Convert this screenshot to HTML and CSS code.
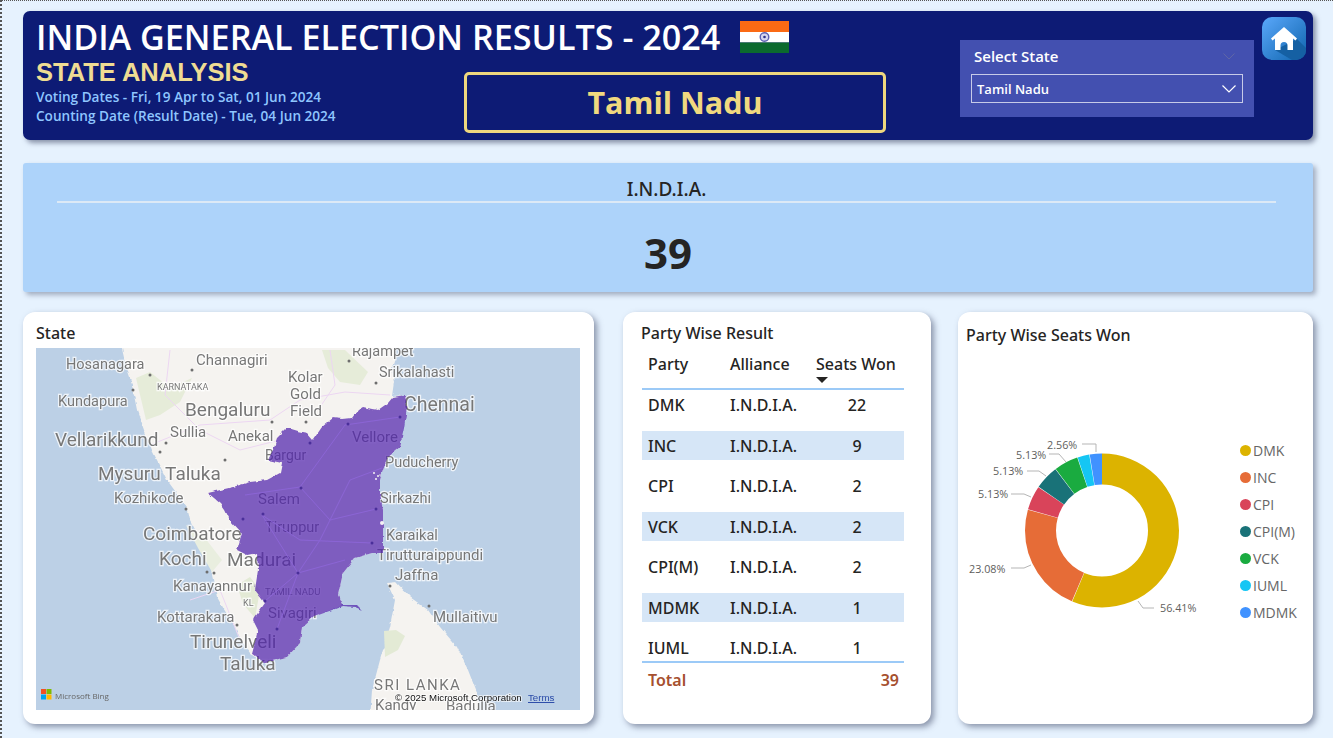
FILE: index.html
```html
<!DOCTYPE html>
<html lang="en">
<head>
  <meta charset="UTF-8">
  <title>India General Election Results 2024</title>
  <link rel="stylesheet" href="styles.css">
</head>
<body>
  <div class="page">
    <header class="banner">
      <div class="banner-left">
        <div class="title-row">
          <h1>INDIA GENERAL ELECTION RESULTS - 2024</h1>
          <svg class="flag" viewBox="0 0 49 32">
            <rect width="49" height="11" fill="#fb6a14"/>
            <rect y="11" width="49" height="10.5" fill="#fff"/>
            <rect y="21.5" width="49" height="10.5" fill="#0b6a2e"/>
            <circle cx="24.5" cy="16" r="4.3" fill="#d5d6f0" stroke="#5c60b4" stroke-width="1.4"/>
            <circle cx="24.5" cy="16" r="1.3" fill="#2a2f8c"/>
          </svg>
        </div>
        <h2>STATE ANALYSIS</h2>
        <p>Voting Dates - Fri, 19 Apr to Sat, 01 Jun 2024</p>
        <p>Counting Date (Result Date) - Tue, 04 Jun 2024</p>
      </div>
      <div class="state-box">Tamil Nadu</div>
      <div class="slicer">
        <div class="slicer-head">
          <span>Select State</span>
          <svg class="chev" viewBox="0 0 12 7"><path d="M.5.5 6 6 11.5.5" fill="none" stroke="#5f66a6"/></svg>
        </div>
        <div class="slicer-drop">
          <span>Tamil Nadu</span>
          <svg class="chev" viewBox="0 0 14 8"><path d="M.5.5 7 7 13.5.5" fill="none" stroke="#fff" stroke-width="1.2"/></svg>
        </div>
      </div>
      <svg class="home" viewBox="1262 17 44 43">
        <defs>
          <linearGradient id="homeBg" x1="0" y1="0" x2="1" y2="1">
            <stop offset="0" stop-color="#5aa8fb"/>
            <stop offset="1" stop-color="#0f64ad"/>
          </linearGradient>
          <clipPath id="homeClip"><rect x="1262" y="17" width="44" height="43" rx="10"/></clipPath>
        </defs>
        <rect x="1262" y="17" width="44" height="43" rx="10" fill="url(#homeBg)"/>
        <path clip-path="url(#homeClip)" d="M1297 39 1306 48V60H1292L1275 50Z" fill="#1560a3"/>
        <path d="M1284 27 1297 38.5 1295.5 40.5 1293 38.5V50H1287.5V45.5A3.5 3.5 0 0 0 1280.5 45.5V50H1275V38.5L1272.5 40.5 1271 38.5Z" fill="#fff"/>
      </svg>
    </header>

    <section class="alliance">
      <div class="alliance-name">I.N.D.I.A.</div>
      <div class="alliance-seats">39</div>
    </section>

    <div class="cards">
      <section class="card map-card">
        <h3>State</h3>
        <svg class="map" viewBox="36 348 544 362">
          <defs>
            <!-- breaks up the straight polygon edges so coasts look hand-traced -->
            <filter id="rough" x="-5%" y="-5%" width="110%" height="110%">
              <feTurbulence type="fractalNoise" baseFrequency="0.14" numOctaves="2" seed="4"/>
              <feDisplacementMap in="SourceGraphic" scale="4" xChannelSelector="R" yChannelSelector="G"/>
            </filter>
          </defs>
          <rect x="36" y="348" width="544" height="362" fill="#bcd0e6"/>
          <g class="soft">
            <!-- mainland and Sri Lanka -->
            <path class="coast" d="M120 340 125 362 130 377 134 395 137 410 144 430 152 450 160 466 167 480 178 495 187 507 190 520 199 537 207 553 212 575 217 597 225 611 233 623 241 640 250 653 265 663 287 657 300 643 302 627 313 617 343 605 338 595 343 573 355 558 372 553 383 553 383 510 380 493 380 480 383 470 388 457 400 447 407 407 405 395 392 396 394 382 392 368 396 355 397 340Z" fill="#f5f3f0"/>
            <path class="coast" d="M387 583 396 582 410 597 428 610 440 627 457 647 468 670 477 693 480 720H370L372 690 380 660 386 640 390 627 395 600Z" fill="#f5f3f0"/>
            <path d="M136 378 150 372 170 388 192 378 180 402 160 415 146 420Z" fill="#e6ecd9"/>
            <path d="M322 350 345 350 368 372 360 385 340 382 328 368Z" fill="#e6ecd9"/>
            <path d="M237 585 250 577 260 590 255 618 243 604Z" fill="#e3ead5"/>
            <path d="M186 525 205 538 222 560 212 572 198 548Z" fill="#e9eedf"/>
            <path d="M384 631 396 630 405 636 398 650 385 657Z" fill="#e3ead5"/>
            <!-- roads -->
            <g class="roads">
              <path d="M150 445 200 425 270 420 300 400 345 392 390 395"/>
              <path d="M170 350 165 395 200 430 240 450 280 440"/>
              <path d="M330 350 335 385 318 410"/>
              <path d="M190 600 220 590 240 640"/>
            </g>
            <!-- place labels below the state shading -->
            <g class="lbl">
              <text x="66" y="369" font-size="14.5">Hosanagara</text>
              <text x="196" y="365" font-size="15">Channagiri</text>
              <text x="352" y="356" font-size="14.5">Rajampet</text>
              <text x="379" y="377" font-size="14.5">Srikalahasti</text>
              <text x="157" y="390" font-size="9">KARNATAKA</text>
              <text x="288" y="382" font-size="15">Kolar</text>
              <text x="290" y="399" font-size="15">Gold</text>
              <text x="290" y="416" font-size="15">Field</text>
              <text x="58" y="406" font-size="14.5">Kundapura</text>
              <text x="185" y="416" font-size="19">Bengaluru</text>
              <text x="404" y="411" font-size="19.5">Chennai</text>
              <text x="170" y="437" font-size="15">Sullia</text>
              <text x="228" y="441" font-size="15">Anekal</text>
              <text x="55" y="446" font-size="19">Vellarikkund</text>
              <text x="265" y="460" font-size="14">Bargur</text>
              <text x="352" y="442" font-size="15">Vellore</text>
              <text x="385" y="467" font-size="14.5">Puducherry</text>
              <text x="98" y="480" font-size="19">Mysuru Taluka</text>
              <text x="114" y="503" font-size="15">Kozhikode</text>
              <text x="258" y="504" font-size="15">Salem</text>
              <text x="380" y="503" font-size="14.5">Sirkazhi</text>
              <text x="265" y="532" font-size="14.5">Tiruppur</text>
              <text x="143" y="540" font-size="19">Coimbatore</text>
              <text x="386" y="540" font-size="14.5">Karaikal</text>
              <text x="159" y="565" font-size="19">Kochi</text>
              <text x="227" y="566" font-size="19">Madurai</text>
              <text x="377" y="560" font-size="15">Tirutturaippundi</text>
              <text x="395" y="580" font-size="15">Jaffna</text>
              <text x="173" y="591" font-size="15">Kanayannur</text>
              <text x="265" y="595" font-size="9.5">TAMIL NADU</text>
              <text x="243" y="606" font-size="9">KL</text>
              <text x="433" y="622" font-size="15">Mullaitivu</text>
              <text x="157" y="622" font-size="15">Kottarakara</text>
              <text x="268" y="618" font-size="15">Sivagiri</text>
              <text x="190" y="648" font-size="19">Tirunelveli</text>
              <text x="220" y="670" font-size="19">Taluka</text>
              <text x="374" y="690" font-size="15" letter-spacing="1.5">SRI LANKA</text>
              <text x="375" y="710" font-size="15">Kandy</text>
              <text x="446" y="711" font-size="15">Badulla</text>
            </g>
            <g class="dots">
              <circle cx="150" cy="375" r="1.5"/><circle cx="192" cy="370" r="1.5"/><circle cx="133" cy="390" r="1.5"/>
              <circle cx="272" cy="422" r="1.5"/><circle cx="306" cy="422" r="1.5"/><circle cx="349" cy="361" r="1.5"/>
              <circle cx="376" cy="383" r="1.5"/><circle cx="166" cy="443" r="1.5"/><circle cx="160" cy="452" r="1.5"/>
              <circle cx="225" cy="460" r="1.5"/><circle cx="186" cy="509" r="1.5"/><circle cx="207" cy="572" r="1.5"/>
              <circle cx="214" cy="573" r="1.5"/><circle cx="237" cy="625" r="1.5"/><circle cx="390" cy="586" r="1.5"/>
              <circle cx="429" cy="606" r="1.5"/>
            </g>
            <!-- Tamil Nadu shading -->
            <path class="state-shade coast" d="M287 428 297 431 307 433 313 440 322 427 333 418 343 419 352 418 358 410 363 407 372 409 378 410 388 403 393 397 405 395 407 407 404 428 400 447 388 457 383 470 380 480 380 493 383 510 383 553 372 553 355 558 343 573 338 595 343 605 357 605 362 610 355 607 343 606 313 617 302 627 300 643 287 657 265 663 252 653 258 630 253 620 265 603 255 590 258 570 257 553 247 555 237 550 242 533 230 520 225 510 220 503 208 493 233 487 250 482 267 480 280 473 282 463 268 460 273 450 277 438Z"/>
            <g class="state-roads">
              <path d="M245 495 300 487 345 425 400 417"/>
              <path d="M262 515 300 540 372 543"/>
              <path d="M300 487 330 520 376 509"/>
              <path d="M298 573 320 540 350 480 382 468"/>
              <path d="M265 601 298 573 345 560"/>
              <path d="M277 629 298 573 262 515"/>
            </g>
            <g class="dots dark">
              <circle cx="310" cy="443" r="1.5"/><circle cx="348" cy="424" r="1.5"/><circle cx="400" cy="417" r="1.5"/>
              <circle cx="301" cy="488" r="1.5"/><circle cx="263" cy="514" r="1.5"/><circle cx="243" cy="519" r="1.5"/>
              <circle cx="376" cy="509" r="1.5"/><circle cx="372" cy="543" r="1.5"/>
              <circle cx="298" cy="573" r="1.5"/><circle cx="265" cy="601" r="1.5"/><circle cx="277" cy="629" r="1.5"/>
            </g>
            <g class="speck">
              <circle cx="374" cy="473" r="1"/><circle cx="378" cy="476" r="1"/><circle cx="376" cy="479" r="1"/><circle cx="380" cy="475" r=".8"/>
              <circle cx="382" cy="523" r="2"/>
            </g>
          </g>
          <rect x="41" y="689" width="5" height="5" fill="#f25022"/>
          <rect x="46.5" y="689" width="5" height="5" fill="#7fba00"/>
          <rect x="41" y="694.5" width="5" height="5" fill="#00a4ef"/>
          <rect x="46.5" y="694.5" width="5" height="5" fill="#ffb900"/>
          <text class="bing" x="55" y="698.5">Microsoft Bing</text>
          <text class="copy" x="395" y="701">© 2025 Microsoft Corporation</text>
          <text class="terms" x="528" y="701">Terms</text>
        </svg>
      </section>

      <section class="card table-card">
        <h3>Party Wise Result</h3>
        <div class="tbl-head">
          <span>Party</span>
          <span>Alliance</span>
          <span class="sorted">Seats Won</span>
        </div>
        <div class="tbl-row"><span>DMK</span><span>I.N.D.I.A.</span><span class="num">22</span></div>
        <div class="tbl-row band"><span>INC</span><span>I.N.D.I.A.</span><span class="num">9</span></div>
        <div class="tbl-row"><span>CPI</span><span>I.N.D.I.A.</span><span class="num">2</span></div>
        <div class="tbl-row band"><span>VCK</span><span>I.N.D.I.A.</span><span class="num">2</span></div>
        <div class="tbl-row"><span>CPI(M)</span><span>I.N.D.I.A.</span><span class="num">2</span></div>
        <div class="tbl-row band"><span>MDMK</span><span>I.N.D.I.A.</span><span class="num">1</span></div>
        <div class="tbl-row"><span>IUML</span><span>I.N.D.I.A.</span><span class="num">1</span></div>
        <div class="tbl-total"><span>Total</span><span></span><span class="total-num">39</span></div>
      </section>

      <section class="card donut-card">
        <h3>Party Wise Seats Won</h3>
        <div class="donut-body">
          <svg class="donut" viewBox="958 425 275 210">
            <g class="ring">
              <circle pathLength="39" stroke="#dcb300" stroke-dasharray="21.96 17.04" stroke-dashoffset="0"/>
              <circle pathLength="39" stroke="#e66c37" stroke-dasharray="8.96 30.04" stroke-dashoffset="-22"/>
              <circle pathLength="39" stroke="#d9445a" stroke-dasharray="1.96 37.04" stroke-dashoffset="-31"/>
              <circle pathLength="39" stroke="#197278" stroke-dasharray="1.96 37.04" stroke-dashoffset="-33"/>
              <circle pathLength="39" stroke="#1aab40" stroke-dasharray="1.96 37.04" stroke-dashoffset="-35"/>
              <circle pathLength="39" stroke="#15c6f4" stroke-dasharray=".96 38.04" stroke-dashoffset="-37"/>
              <circle pathLength="39" stroke="#4092ff" stroke-dasharray="1 38" stroke-dashoffset="-38"/>
            </g>
            <g class="leaders">
              <path d="M1082 444H1096V452"/>
              <path d="M1049 454H1059L1066 462"/>
              <path d="M1027 471H1039L1046 476"/>
              <path d="M1011 494H1024L1031 497"/>
              <path d="M1011 568H1024L1031 565"/>
              <path d="M1154 608H1143L1138 601"/>
            </g>
            <g class="pct">
              <text x="1047" y="449">2.56%</text>
              <text x="1016" y="459">5.13%</text>
              <text x="993" y="475">5.13%</text>
              <text x="978" y="498">5.13%</text>
              <text x="969" y="573">23.08%</text>
              <text x="1160" y="612">56.41%</text>
            </g>
          </svg>
          <ul class="legend">
            <li><i class="c-dmk"></i>DMK</li>
            <li><i class="c-inc"></i>INC</li>
            <li><i class="c-cpi"></i>CPI</li>
            <li><i class="c-cpim"></i>CPI(M)</li>
            <li><i class="c-vck"></i>VCK</li>
            <li><i class="c-iuml"></i>IUML</li>
            <li><i class="c-mdmk"></i>MDMK</li>
          </ul>
        </div>
      </section>
    </div>
  </div>
</body>
</html>
```

FILE: styles.css
```css
* {
  box-sizing: border-box;
}
body {
  margin: 0;
  background: #e6f2fe;
  font-family: "Open Sans", "Noto Sans", sans-serif;
  color: #252423;
}
.page {
  width: 1333px;
  height: 738px;
  overflow: hidden;
  padding: 10px 20px 0 21px;
  border-top: 1px dotted #555;
  border-left: 2px dotted #555;
}
h1, h2, h3, p, ul {
  margin: 0;
  padding: 0;
}

/* banner */
.banner {
  display: flex;
  height: 129px;
  background: #0d1b75;
  border-radius: 7px;
  box-shadow: 3px 3px 5px rgba(60, 70, 100, 0.55);
  color: #fff;
}
.banner-left {
  width: 441px;
  padding: 9px 0 0 13px;
  flex: none;
}
.title-row {
  display: flex;
  width: 790px;
  align-items: center;
  gap: 20px;
  height: 34px;
}
h1 {
  font-size: 34.15px;
  font-weight: 600;
  line-height: 34px;
  white-space: nowrap;
}
.flag {
  width: 49px;
  height: 32px;
  flex: none;
}
.banner-left h2 {
  margin-top: 3px;
  font-family: "Liberation Sans", sans-serif;
  font-size: 25.5px;
  font-weight: 700;
  line-height: 30px;
  color: #efdc93;
}
.banner-left p {
  font-size: 13.6px;
  font-weight: 600;
  line-height: 19px;
  color: #8fc6ff;
  white-space: nowrap;
}
.state-box {
  width: 422px;
  height: 61px;
  margin-top: 61px;
  flex: none;
  border: 3px solid #eed77e;
  border-radius: 5px;
  text-align: center;
  font-size: 30.5px;
  font-weight: 700;
  line-height: 55px;
  color: #f0d97f;
}
.slicer {
  width: 294px;
  height: 77px;
  margin: 29px 0 0 74px;
  padding: 0 11px;
  flex: none;
  background: #4350b0;
}
.slicer-head {
  display: flex;
  justify-content: space-between;
  align-items: center;
  height: 34px;
  padding: 0 8px 2px 3px;
  font-size: 15px;
  font-weight: 600;
}
.slicer-head .chev {
  width: 12px;
  height: 7px;
}
.slicer-drop {
  display: flex;
  justify-content: space-between;
  align-items: center;
  height: 29px;
  padding: 1px 6px 0 5px;
  border: 1px solid #c7cbe8;
  font-size: 13px;
  font-weight: 600;
}
.slicer-drop .chev {
  width: 14px;
  height: 8px;
}
.home {
  width: 44px;
  height: 43px;
  margin: 6px 0 0 8px;
  flex: none;
}

/* alliance strip */
.alliance {
  height: 129px;
  margin-top: 23px;
  background: #add3fa;
  border-radius: 3px;
  box-shadow: 3px 3px 5px rgba(60, 70, 100, 0.4);
  text-align: center;
}
.alliance-name {
  height: 40px;
  margin: 0 37px 0 34px;
  border-bottom: 2px solid #dce9f6;
  font-family: "Noto Sans", sans-serif;
  font-size: 19px;
  font-weight: 500;
  line-height: 53px;
}
.alliance-seats {
  font-size: 42px;
  font-weight: 700;
  line-height: 54px;
  margin-top: 23px;
}

/* bottom cards */
.cards {
  display: flex;
  margin-top: 20px;
}
.card {
  height: 412px;
  flex: none;
  background: #fff;
  border-radius: 12px;
  box-shadow: 3px 3px 6px rgba(60, 70, 100, 0.55);
}
h3 {
  font-family: "Noto Sans", sans-serif;
  font-size: 16px;
  font-weight: 500;
  line-height: 22px;
}

/* map */
.map-card {
  width: 571px;
  padding: 10px 13px;
}
.map {
  display: block;
  width: 544px;
  height: 362px;
  margin-top: 4px;
}
.soft {
  filter: blur(0.35px);
}
.coast {
  filter: url(#rough);
}
.roads path {
  fill: none;
  stroke: #ecd6f2;
  stroke-width: 1;
}
.state-roads path {
  fill: none;
  stroke: #8a64d4;
  stroke-width: 1;
}
.lbl text {
  font-family: Roboto, sans-serif;
  fill: #777;
  stroke: #fff;
  stroke-opacity: 0.75;
  stroke-width: 2.5px;
  paint-order: stroke;
}
.dots circle {
  fill: #6e6e6e;
}
.dots.dark circle {
  fill: #4a2f9a;
}
.speck circle {
  fill: #f4f0f4;
}
.state-shade {
  fill: #5020ac;
  fill-opacity: 0.72;
}
.bing {
  font-family: "Open Sans", sans-serif;
  font-size: 8px;
  fill: #666;
}
.copy {
  font-family: "Liberation Sans", sans-serif;
  font-size: 9.7px;
  fill: #111;
  stroke: #fff;
  stroke-opacity: 0.6;
  stroke-width: 2px;
  paint-order: stroke;
}
.terms {
  font-family: "Liberation Sans", sans-serif;
  font-size: 9.7px;
  fill: #2a4aa8;
  text-decoration: underline;
}

/* table */
.table-card {
  width: 308px;
  margin-left: 29px;
  padding: 10px 27px 0 19px;
  font-family: "Noto Sans", sans-serif;
}
.table-card h3 {
  margin-left: -1px;
}
.tbl-head, .tbl-row, .tbl-total {
  display: grid;
  grid-template-columns: 82px 86px 94px;
}
.tbl-head span, .tbl-row span, .tbl-total span {
  padding-left: 6px;
}
.tbl-head {
  height: 46px;
  padding-top: 9px;
  border-bottom: 2px solid #9ccaf7;
  font-size: 16px;
  font-weight: 500;
  line-height: 22px;
}
.sorted {
  position: relative;
  white-space: nowrap;
}
.sorted::after {
  content: "";
  position: absolute;
  left: 6px;
  top: 24px;
  border: 6px solid transparent;
  border-top: 6px solid #252423;
  border-bottom: 0;
}
.tbl-row {
  height: 29px;
  margin-top: 11.5px;
  font-size: 16px;
  font-weight: 500;
  line-height: 31px;
}
.tbl-head + .tbl-row {
  margin-top: 0;
}
.band {
  background: #d6e6f7;
}
.tbl-row .num {
  padding-left: 0;
  text-align: center;
}
.tbl-total {
  height: 34px;
  margin-top: -1px;
  border-top: 2px solid #9ccaf7;
  font-size: 16px;
  font-weight: 600;
  line-height: 35px;
  color: #a6502f;
}
.total-num {
  text-align: right;
  padding-right: 5px;
}

/* donut */
.donut-card {
  width: 355px;
  margin-left: 27px;
  padding: 12px 0 0 8px;
}
.donut-body {
  display: flex;
  margin: 79px 0 0 -8px;
}
.donut {
  width: 275px;
  height: 210px;
  flex: none;
}
.ring circle {
  cx: 1102px;
  cy: 530.5px;
  r: 61.5px;
  fill: none;
  stroke-width: 31px;
  transform: rotate(-90deg);
  transform-origin: 1102px 530.5px;
}
.leaders path {
  fill: none;
  stroke: #b5b5b5;
  stroke-width: 1;
}
.pct text {
  font-size: 10.8px;
  fill: #605e5c;
}
.legend {
  list-style: none;
  margin: 11.5px 0 0 7px;
}
.legend li {
  display: flex;
  align-items: center;
  gap: 2px;
  height: 27px;
  font-size: 14px;
  color: #666;
}
.legend i {
  width: 11px;
  height: 11px;
  border-radius: 50%;
}
.c-dmk { background: #dcb300; }
.c-inc { background: #e66c37; }
.c-cpi { background: #d9445a; }
.c-cpim { background: #197278; }
.c-vck { background: #1aab40; }
.c-iuml { background: #15c6f4; }
.c-mdmk { background: #4092ff; }
```
